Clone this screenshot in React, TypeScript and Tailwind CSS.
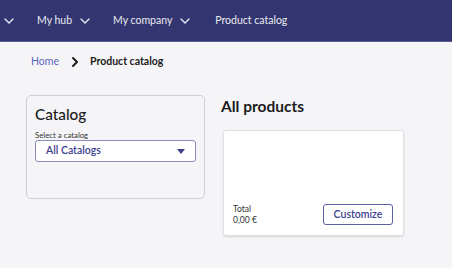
import { ChevronDown, ChevronRight } from "lucide-react";

function NavItem({ label, chevron }: { label: string; chevron?: boolean }) {
  return (
    <div className="flex items-center gap-[5px] text-[10.5px] text-white/90">
      <span>{label}</span>
      {chevron && <ChevronDown size={16} strokeWidth={2} />}
    </div>
  );
}

export default function App() {
  return (
    <div
      className="w-[452px] h-[268px] overflow-hidden bg-[#f5f5f8] text-[#1c1c1c]"
      style={{ fontFamily: "Lato, 'Open Sans', sans-serif" }}
    >
      {/* Top nav */}
      <header className="h-[42px] bg-[#32356f] border-b border-[#5a5d98] flex items-center pl-[1px] gap-[20px]">
        <div className="flex items-center text-white/90">
          <ChevronDown size={16} strokeWidth={2} />
        </div>
        <NavItem label="My hub" chevron />
        <NavItem label="My company" chevron />
        <div className="ml-[2px]">
          <NavItem label="Product catalog" />
        </div>
      </header>

      {/* Breadcrumb */}
      <nav className="flex items-center pl-[31px] pt-[3px] h-[36px] text-[10.5px]">
        <span className="text-[#5a64b8]">Home</span>
        <ChevronRight size={16} strokeWidth={3} className="ml-[8px] mr-[7px] text-[#1c1c1c]" />
        <span className="font-bold">Product catalog</span>
      </nav>

      <div className="flex pl-[26px] pt-[17px] gap-[18px]">
        {/* Catalog filter */}
        <aside className="w-[179px] h-[104px] border border-[#cfcfd6] rounded-[5px] bg-[#f5f5f8] px-[8px] pt-[9px]">
          <h2 className="text-[15.3px] leading-[18px] font-medium">Catalog</h2>
          <label className="block text-[7.8px] leading-[10px] mt-[7px] text-[#333]">
            Select a catalog
          </label>
          <div className="h-[22px] border border-[#8a8cc0] rounded-[3px] bg-white flex items-center justify-between pl-[10px] pr-[10px]">
            <span className="text-[10.5px] text-[#3c3f8e] font-semibold">All Catalogs</span>
            <svg width="8" height="5" viewBox="0 0 8 5">
              <path d="M0 0h8L4 5z" fill="#3c3f8e" />
            </svg>
          </div>
        </aside>

        {/* Products */}
        <section className="flex flex-col">
          <h1 className="text-[15.5px] leading-[20px] font-bold ml-[-2px] mt-[1px]">All products</h1>
          <div className="mt-[14px] w-[181px] h-[106px] bg-white border border-[#e0e0e6] rounded-[3px] shadow-[0_1px_2px_rgba(0,0,0,0.12)] flex items-end justify-between pl-[9px] pr-[10px] pb-[10px]">
            <div className="text-[8.5px] leading-[11px] text-[#333] mb-[-1px]">
              <div>Total</div>
              <div>0,00 €</div>
            </div>
            <button className="h-[21px] w-[70px] border border-[#5a5ea6] rounded-[3px] text-[10.5px] font-semibold text-[#3c3f8e] bg-white">
              Customize
            </button>
          </div>
        </section>
      </div>
    </div>
  );
}
